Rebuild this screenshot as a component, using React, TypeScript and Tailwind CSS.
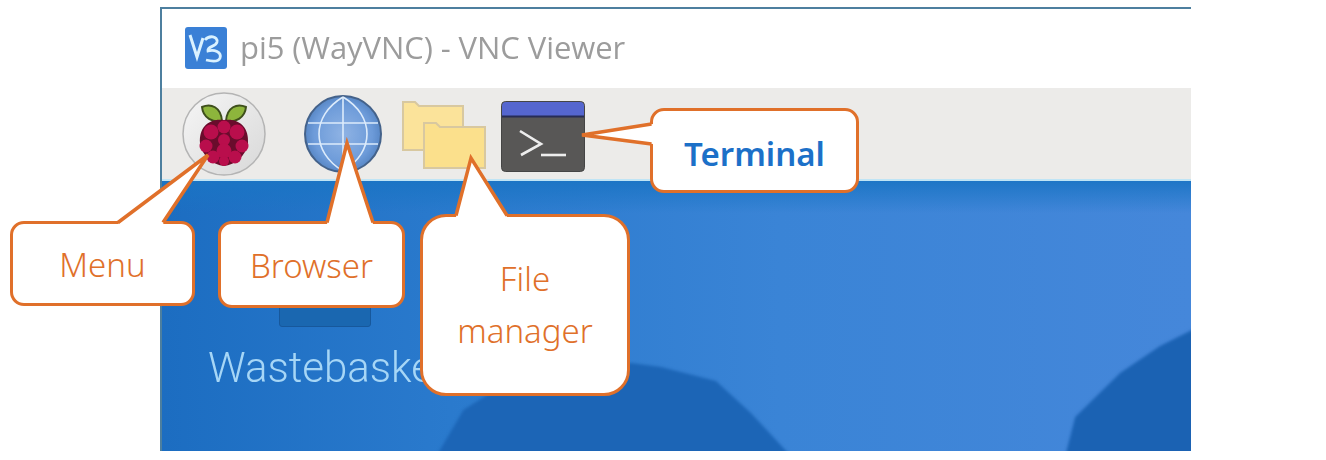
const berries: [number, number, number][] = [
  [224, 127, 6.5], [211, 132, 7.5], [237, 132, 7.5], [224, 140, 6],
  [206, 146, 6.5], [242, 146, 6.5], [224, 151, 7.5], [213, 157, 6.5], [235, 157, 6.5], [224, 161, 5],
];

function Raspberry() {
  return (
    <svg width="86" height="86" viewBox="0 0 86 86" className="blur-[0.6px] shrink-0">
      <defs>
        <linearGradient id="dish" x1="0" y1="0" x2="1" y2="1">
          <stop offset="0" stopColor="#f6f6f6" />
          <stop offset="1" stopColor="#d8d8d8" />
        </linearGradient>
      </defs>
      <circle cx="43" cy="43" r="41" fill="url(#dish)" stroke="#b4b4b4" strokeWidth="1.5" />
      <g transform="translate(-181 -91)">
        <path d="M222 121C213 123 203 118 202 107C211 103 221 107 222 121Z" fill="#8db53c" stroke="#3e4f1c" strokeWidth="2" />
        <path d="M226 121C235 123 245 118 246 107C237 103 227 107 226 121Z" fill="#8db53c" stroke="#3e4f1c" strokeWidth="2" />
        <path d="M224 120C240 118 249 128 248 143C246 156 235 165 224 166C213 165 202 156 200 143C199 128 208 118 224 120Z" fill="#6a0c2c" />
        {berries.map(([x, y, r]) => (
          <circle key={`${x}-${y}`} cx={x} cy={y} r={r} fill="#b90e4c" />
        ))}
      </g>
    </svg>
  );
}

function Globe() {
  return (
    <svg width="80" height="80" viewBox="0 0 80 80" className="blur-[0.4px] shrink-0">
      <defs>
        <radialGradient id="sea" cx="0.5" cy="0.5" r="0.55">
          <stop offset="0" stopColor="#8fb3e4" />
          <stop offset="0.7" stopColor="#6d9bd9" />
          <stop offset="1" stopColor="#4f7fbe" />
        </radialGradient>
      </defs>
      <circle cx="40" cy="40" r="38" fill="url(#sea)" stroke="#44628a" strokeWidth="2" />
      <g fill="none" stroke="#dcebfb" strokeWidth="1.6">
        <path d="M40 3V77" />
        <path d="M5 29H75" />
        <path d="M5 50H75" />
        <path d="M40 3C8 22 8 58 40 77" />
        <path d="M40 3C72 22 72 58 40 77" />
      </g>
    </svg>
  );
}

function Folders() {
  return (
    <svg width="86" height="70" viewBox="0 0 86 70" className="blur-[0.6px] shrink-0">
      <path d="M2 2H14L18 6H62V50H2Z" fill="#fbe39a" stroke="#d8c8a0" strokeWidth="2" />
      <path d="M23 23H35L39 27H84V68H23Z" fill="#fbe08c" stroke="#d8c8a0" strokeWidth="2" />
    </svg>
  );
}

function TerminalIcon() {
  return (
    <svg width="84" height="71" viewBox="0 0 84 71" className="blur-[0.4px] shrink-0">
      <rect x="0.5" y="0.5" width="83" height="70" rx="4" fill="#585756" stroke="#454545" />
      <path d="M1 5a4 4 0 0 1 4-4h74a4 4 0 0 1 4 4v10H1Z" fill="#5566cf" />
      <path d="M1 15.5H83" stroke="#272c55" strokeWidth="2" />
      <path d="M19 30L40 43L20 54" fill="none" stroke="#ededed" strokeWidth="2.6" />
      <path d="M40 54H65" stroke="#ededed" strokeWidth="2.6" />
    </svg>
  );
}

function VncLogo() {
  return (
    <svg width="42" height="42" viewBox="0 0 42 42" className="blur-[0.5px] shrink-0">
      <rect width="42" height="42" rx="3" fill="#3a80d6" />
      <path d="M5 8L12 30L18 11" fill="none" stroke="#d9f1ff" strokeWidth="3" />
      <path d="M20 13C24 8 33 9 32 15C31 20 22 19 23 24C29 22 37 25 35 31C33 36 25 34 21 33" fill="none" stroke="#d9f1ff" strokeWidth="2.8" />
    </svg>
  );
}

function Wallpaper() {
  return (
    <svg viewBox="0 0 1031 270" preserveAspectRatio="none" className="absolute inset-0 w-full h-full">
      <defs>
        <linearGradient id="sky" x1="0" y1="0" x2="1" y2="0">
          <stop offset="0" stopColor="#1c6dc1" />
          <stop offset="0.28" stopColor="#2a7acd" />
          <stop offset="0.6" stopColor="#3a84d6" />
          <stop offset="1" stopColor="#4587da" />
        </linearGradient>
        <linearGradient id="fade" x1="0" y1="0" x2="0" y2="1">
          <stop offset="0" stopColor="#1a74c4" stopOpacity="0.9" />
          <stop offset="1" stopColor="#1a74c4" stopOpacity="0" />
        </linearGradient>
      </defs>
      <rect width="1031" height="270" fill="url(#sky)" />
      <rect width="1031" height="32" fill="url(#fade)" />
      <g className="blur-[1.5px]">
        <path d="M275 275L302 229L340 205L470 182L500 186L555 200L590 232L630 275Z" fill="#1c65b6" />
        <path d="M905 275L915 236L960 192L1000 165L1040 145V275Z" fill="#1b62b3" />
      </g>
    </svg>
  );
}

export default function App() {
  const label = "font-['Noto_Sans'] font-light text-[#e0702a] text-[33px] leading-[52px] text-center";
  return (
    <div className="relative w-[1326px] h-[460px] bg-white overflow-hidden pl-[160px] pt-[7px]">
      <div className="w-[1031px] h-[444px] flex flex-col border-l-2 border-t-2 border-[#4d7f9f]">
        <div className="h-[79px] bg-white flex items-center pl-[23px] gap-[13px] pb-[2px]">
          <VncLogo />
          <span className="font-['Open_Sans'] text-[#9c9c9c] text-[31px] leading-none blur-[0.6px] tracking-[-0.07px]">
            pi5 (WayVNC) - VNC Viewer
          </span>
        </div>
        <div className="h-[93px] bg-[#ecebe9] border-b-2 border-[#bfe4f5] flex items-start">
          <div className="ml-[19px] mt-[3px]"><Raspberry /></div>
          <div className="ml-[36px] mt-[6px]"><Globe /></div>
          <div className="ml-[18px] mt-[12px]"><Folders /></div>
          <div className="ml-[14px] mt-[13px]"><TerminalIcon /></div>
        </div>
        <div className="relative flex-1 overflow-hidden">
          <Wallpaper />
          <div className="relative ml-[117px] mt-[110px] w-[92px] h-[36px] bg-[#1a67b0] border border-[#17589c] rounded-b-[3px]" />
          <div className="relative ml-[46px] mt-[15px] font-['Roboto'] font-light text-[#a6d6f6] text-[42px] leading-[52px] blur-[0.4px] whitespace-nowrap">
            Wastebasket
          </div>
        </div>
      </div>

      <div className={`absolute left-[10px] top-[221px] w-[185px] h-[85px] rounded-[14px] border-[3px] border-[#e0702a] bg-white flex items-center justify-center pt-[3px] ${label}`}>
        Menu
      </div>
      <div className={`absolute left-[218px] top-[221px] w-[187px] h-[87px] rounded-[14px] border-[3px] border-[#e0702a] bg-white flex items-center justify-center pt-[3px] ${label}`}>
        Browser
      </div>
      <div className={`absolute left-[420px] top-[214px] w-[210px] h-[182px] rounded-[26px] border-[3px] border-[#e0702a] bg-white flex items-center justify-center ${label}`}>
        File<br />manager
      </div>
      <div className="absolute left-[650px] top-[108px] w-[209px] h-[85px] rounded-[14px] border-[3px] border-[#e0702a] bg-white flex items-center justify-center pt-[5px] font-['Noto_Sans'] font-semibold text-[#1c70c8] text-[33px] leading-none">
        Terminal
      </div>

      <svg width="1326" height="460" viewBox="0 0 1326 460" className="absolute inset-0 pointer-events-none">
        <g fill="#fff" stroke="none">
          <polygon points="118,224 208,155 163,224" />
          <polygon points="327,224 347,143 373,224" />
          <polygon points="456,217 471,158 507,217" />
          <polygon points="653,124 582,135 653,144" />
        </g>
        <g fill="none" stroke="#e0702a" strokeWidth="3.5" strokeLinejoin="miter">
          <polyline points="118,222.5 208,155 163,222.5" />
          <polyline points="327,222.5 347,143 373,222.5" />
          <polyline points="456,215.5 471,158 507,215.5" />
          <polyline points="651.5,124 582,135 651.5,144" />
        </g>
      </svg>
    </div>
  );
}
